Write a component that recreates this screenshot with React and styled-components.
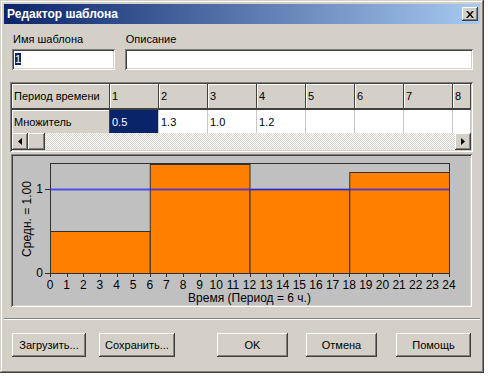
import React from 'react';
import styled, { createGlobalStyle } from 'styled-components';

const GlobalStyle = createGlobalStyle`
  html, body {
    margin: 0;
    padding: 0;
    background: #ffffff;
  }
  body {
    font-family: "Liberation Sans", Arial, sans-serif;
    font-size: 11px;
    color: #000;
  }
`;

const raised = `
  box-shadow: inset -1px -1px #404040, inset 1px 1px #ffffff,
    inset -2px -2px #808080, inset 2px 2px #d4d0c8;
`;

const sunken = `
  box-shadow: inset 1px 1px #808080, inset -1px -1px #ffffff,
    inset 2px 2px #404040, inset -2px -2px #d4d0c8;
`;

const Window = styled.div`
  width: 484px;
  height: 373px;
  box-sizing: border-box;
  padding: 4px;
  background: #d4d0c8;
  display: flex;
  flex-direction: column;
  box-shadow: inset -1px -1px #404040, inset 1px 1px #d4d0c8,
    inset -2px -2px #808080, inset 2px 2px #ffffff;
`;

const TitleBar = styled.div`
  height: 20px;
  display: flex;
  align-items: center;
  justify-content: space-between;
  padding: 0 2px 0 3px;
  background: linear-gradient(to right, #0a246a, #a6caf0);
  color: #fff;
  font-weight: bold;
  font-size: 12px;
`;

const CloseButton = styled.div`
  width: 16px;
  height: 14px;
  background: #d4d0c8;
  display: flex;
  align-items: center;
  justify-content: center;
  ${raised}
`;

const Content = styled.div`
  padding: 0 7px 0 6px;
  display: flex;
  flex-direction: column;
`;

const FieldsRow = styled.div`
  display: flex;
  gap: 10px;
  margin: 9px 0 0 2px;
`;

const Field = styled.div`
  display: flex;
  flex-direction: column;
  width: ${p => p.width}px;
`;

const Label = styled.div`
  height: 13px;
  line-height: 13px;
  margin-bottom: 3px;
  padding-left: 1px;
`;

const TextBox = styled.div`
  height: 21px;
  background: #fff;
  box-sizing: border-box;
  padding: 4px 3px;
  line-height: 13px;
  ${sunken}
`;

const Selected = styled.span`
  background: #0a246a;
  color: #fff;
`;

const GridBox = styled.div`
  margin-top: 12px;
  height: 70px;
  box-sizing: border-box;
  padding: 2px;
  background: #fff;
  display: flex;
  flex-direction: column;
  ${sunken}
`;

const GridRows = styled.div`
  display: grid;
  grid-template-columns: 98px repeat(7, 49px) 1fr;
  overflow: hidden;
`;

const Cell = styled.div`
  box-sizing: border-box;
  height: ${p => (p.header ? 26 : 23)}px;
  padding: 0 2px;
  display: flex;
  align-items: center;
  white-space: nowrap;
  overflow: hidden;
  background: ${p => (p.fixed ? '#d4d0c8' : p.selected ? '#0a246a' : '#fff')};
  color: ${p => (p.selected ? '#fff' : '#000')};
  border-right: 1px solid ${p => (p.fixed ? '#404040' : '#c8c8c8')};
  border-bottom: ${p => (p.header ? '2px solid #404040' : 'none')};
  box-shadow: ${p => (p.fixed ? 'inset 1px 1px #ffffff' : 'none')};
`;

const ScrollBar = styled.div`
  height: 17px;
  display: flex;
  background: repeating-conic-gradient(#d4d0c8 0 25%, #ffffff 0 50%) 0 0 / 2px 2px;
`;

const ScrollButton = styled.div`
  width: 16px;
  height: 17px;
  background: #d4d0c8;
  display: flex;
  align-items: center;
  justify-content: center;
  ${raised}
`;

const Thumb = styled(ScrollButton)`
  width: 17px;
`;

const Track = styled.div`
  flex: 1;
`;

const ChartPanel = styled.div`
  margin: 2px 1px 0;
  height: 153px;
  box-sizing: border-box;
  padding: 2px;
  background: #c0c0c0;
  ${sunken}
`;

const Separator = styled.div`
  margin-top: 11px;
  height: 1px;
  background: #808080;
  border-bottom: 1px solid #ffffff;
`;

const ButtonRow = styled.div`
  display: flex;
  padding-left: 8px;
  margin-top: 13px;
`;

const Button = styled.div`
  width: ${p => p.width}px;
  margin-right: ${p => p.gap || 0}px;
  height: 24px;
  display: flex;
  align-items: center;
  justify-content: center;
  background: #d4d0c8;
  ${raised}
`;

const headers = ['1', '2', '3', '4', '5', '6', '7', '8'];
const values = ['0.5', '1.3', '1.0', '1.2', '', '', '', ''];

const X0 = 37;
const X1 = 436;
const Y0 = 117;
const HOUR = (X1 - X0) / 24;
const UNIT = 84;
const xOf = h => X0 + h * HOUR;
const yOf = v => Y0 - v * UNIT;

function Chart() {
  const bars = [0.5, 1.3, 1.0, 1.2];
  const hours = Array.from({ length: 25 }, (_, i) => i);
  return (
    <svg width="457" height="149" style={{ display: 'block' }}
      fontFamily='"Liberation Sans", Arial, sans-serif' fontSize="12">
      <rect x={X0 + 0.5} y={7.5} width={X1 - X0} height={Y0 - 7} fill="#c0c0c0" stroke="#303030" />
      {bars.map((v, i) => (
        <rect key={i} x={xOf(i * 6) + 0.5} y={Math.round(yOf(v)) + 0.5}
          width={HOUR * 6} height={Y0 - Math.round(yOf(v))}
          fill="#ff8000" stroke="#303030" />
      ))}
      <line x1={X0} x2={X1} y1={yOf(1) + 0.5} y2={yOf(1) + 0.5} stroke="rgba(40,40,255,0.75)" strokeWidth="2" />
      {hours.map(h => (
        <g key={h}>
          <line x1={Math.round(xOf(h)) + 0.5} x2={Math.round(xOf(h)) + 0.5} y1={Y0} y2={Y0 + 4} stroke="#303030" />
          <text x={xOf(h)} y={133} textAnchor="middle" fill="#000">{h}</text>
        </g>
      ))}
      <line x1={32} x2={X0} y1={yOf(1) + 0.5} y2={yOf(1) + 0.5} stroke="#303030" />
      <line x1={32} x2={X0} y1={Y0 + 0.5} y2={Y0 + 0.5} stroke="#303030" />
      <text x={30} y={yOf(1) + 4} textAnchor="end" fill="#000">1</text>
      <text x={30} y={Y0 + 4} textAnchor="end" fill="#000">0</text>
      <text transform="translate(18 63) rotate(-90)" textAnchor="middle" fill="#000">Средн. = 1.00</text>
      <text x={(X0 + X1) / 2} y={146} textAnchor="middle" fill="#000">Время (Период = 6 ч.)</text>
    </svg>
  );
}

export default function App() {
  return (
    <>
      <GlobalStyle />
      <Window>
        <TitleBar>
          <span>Редактор шаблона</span>
          <CloseButton>
            <svg width="8" height="7" viewBox="0 0 8 7">
              <path d="M0 0h2l2 2.5L6 0h2L5 3.5 8 7H6L4 4.5 2 7H0l3-3.5z" fill="#000" />
            </svg>
          </CloseButton>
        </TitleBar>
        <Content>
          <FieldsRow>
            <Field width={103}>
              <Label>Имя шаблона</Label>
              <TextBox><Selected>1</Selected></TextBox>
            </Field>
            <Field width={349}>
              <Label>Описание</Label>
              <TextBox />
            </Field>
          </FieldsRow>
          <GridBox>
            <GridRows>
              <Cell header fixed>Период времени</Cell>
              {headers.map(h => <Cell key={h} header fixed>{h}</Cell>)}
              <Cell fixed>Множитель</Cell>
              {values.map((v, i) => <Cell key={i} selected={i === 0}>{v}</Cell>)}
            </GridRows>
            <ScrollBar>
              <ScrollButton>
                <svg width="4" height="7" viewBox="0 0 4 7"><path d="M4 0v7L0 3.5z" fill="#000" /></svg>
              </ScrollButton>
              <Thumb />
              <Track />
              <ScrollButton>
                <svg width="4" height="7" viewBox="0 0 4 7"><path d="M0 0v7l4-3.5z" fill="#000" /></svg>
              </ScrollButton>
            </ScrollBar>
          </GridBox>
          <ChartPanel>
            <Chart />
          </ChartPanel>
        </Content>
        <Separator />
        <ButtonRow>
          <Button width={74} gap={13}>Загрузить...</Button>
          <Button width={76} gap={42}>Сохранить...</Button>
          <Button width={71} gap={18}>OK</Button>
          <Button width={71} gap={19}>Отмена</Button>
          <Button width={75}>Помощь</Button>
        </ButtonRow>
      </Window>
    </>
  );
}
